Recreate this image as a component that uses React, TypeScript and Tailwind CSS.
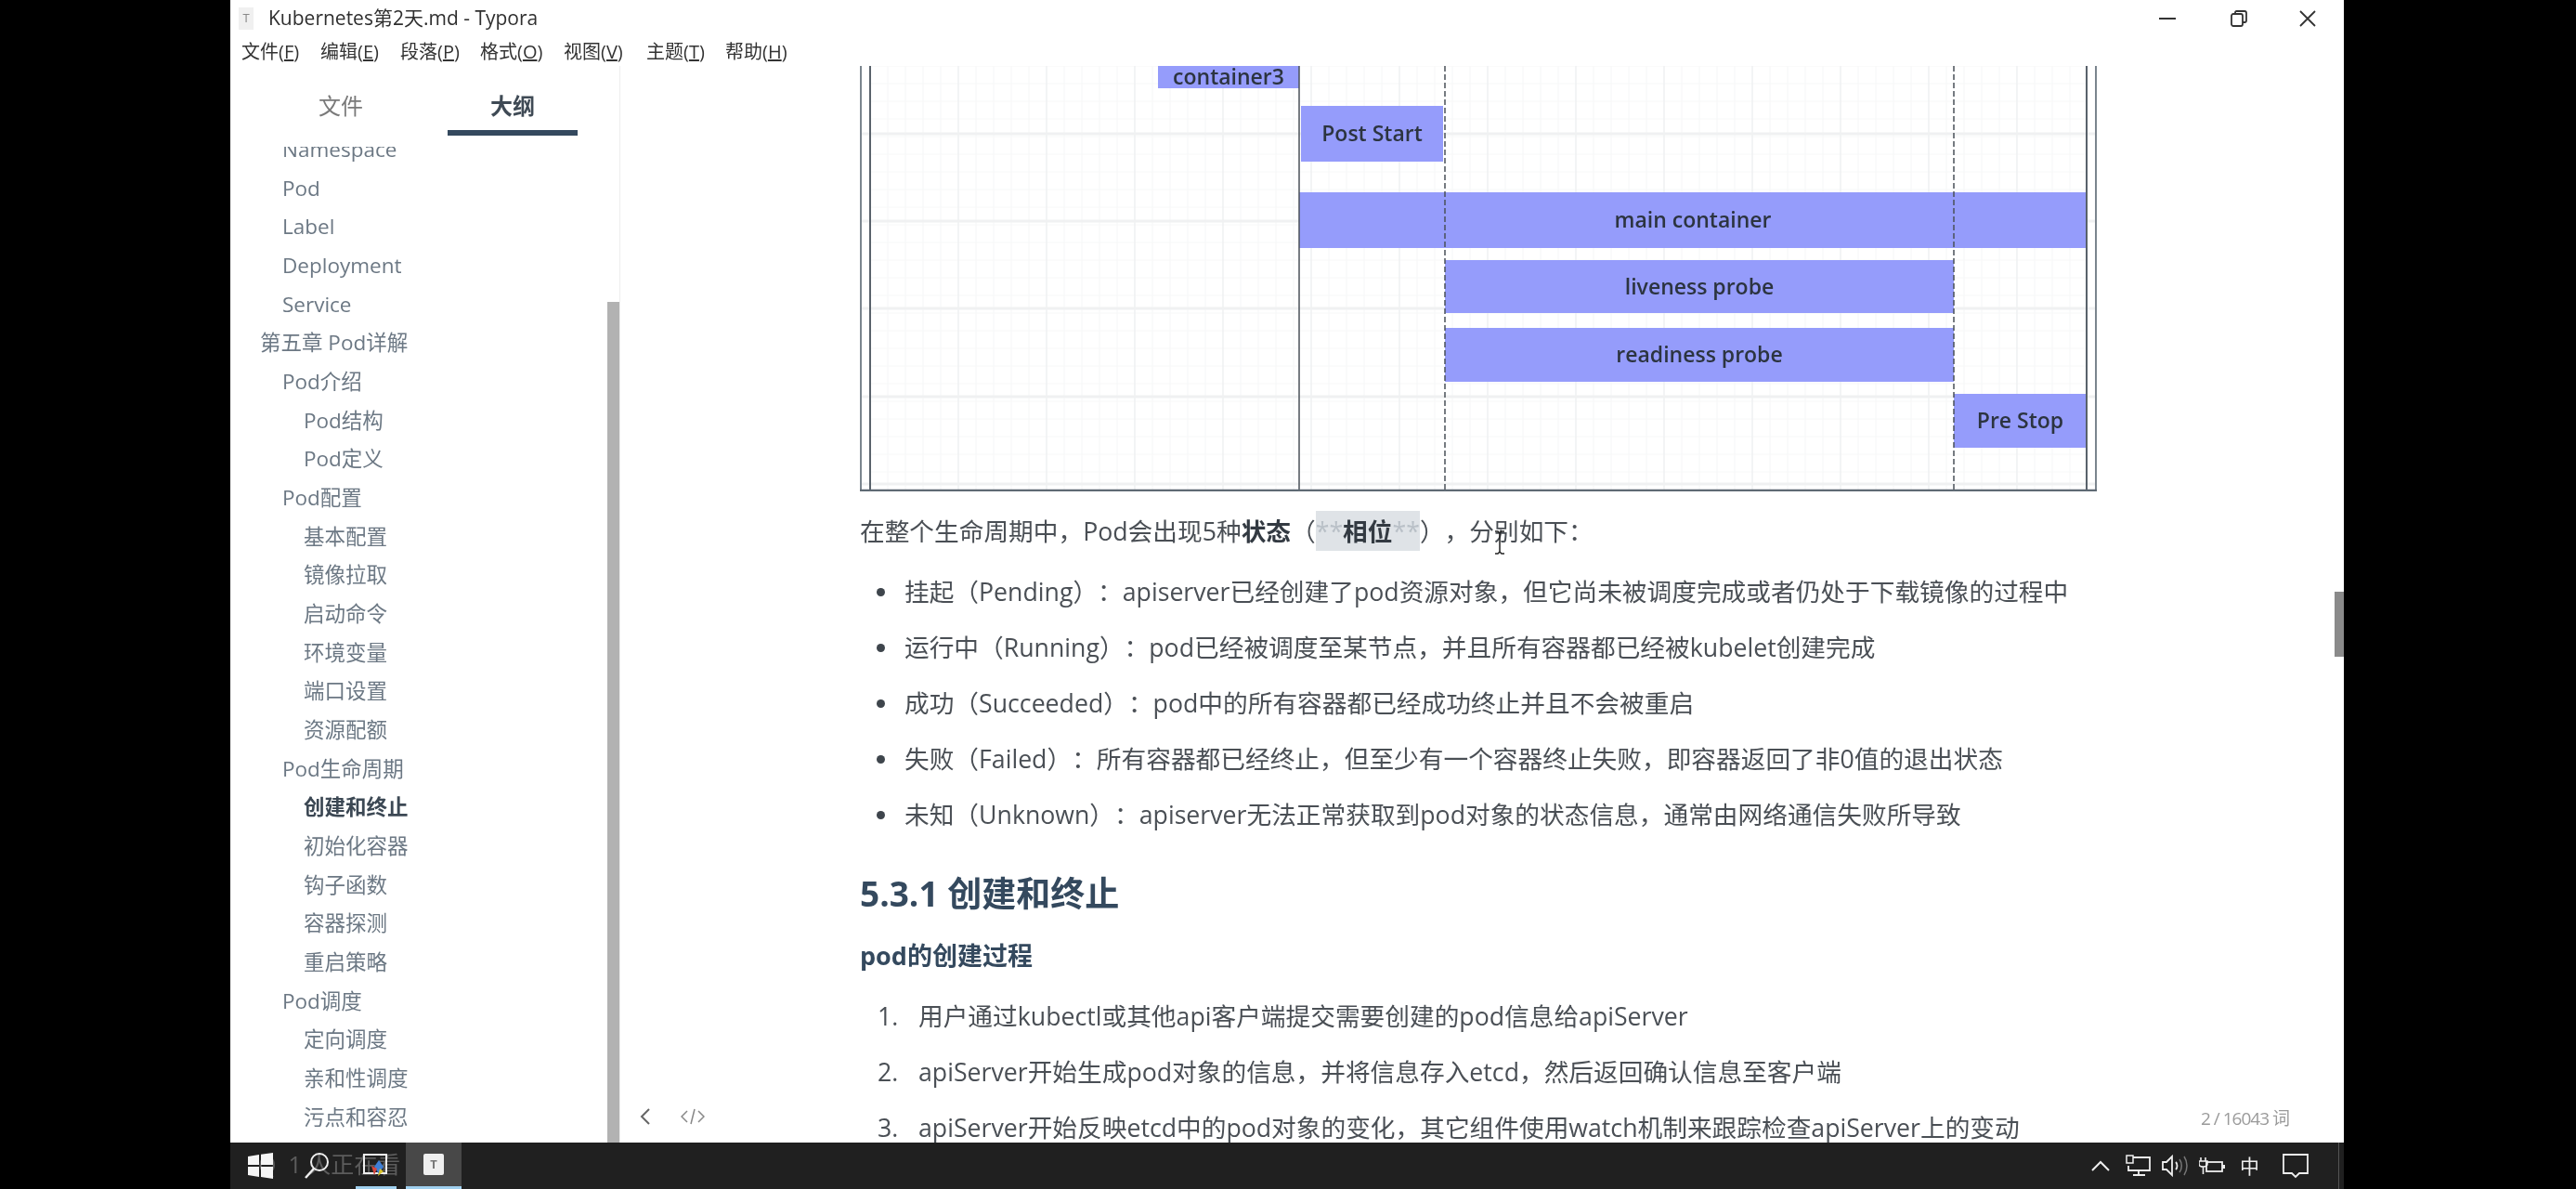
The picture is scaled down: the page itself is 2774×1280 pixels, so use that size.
const FONT = "font-['Open_Sans','Noto_Sans_CJK_SC',sans-serif]";

const MENU = [
  { label: "文件(", key: "F", width: "w-[85px]" },
  { label: "编辑(", key: "E", width: "w-[86px]" },
  { label: "段落(", key: "P", width: "w-[86px]" },
  { label: "格式(", key: "O", width: "w-[90px]" },
  { label: "视图(", key: "V", width: "w-[89px]" },
  { label: "主题(", key: "T", width: "w-[85px]" },
  { label: "帮助(", key: "H", width: "w-[85px]" },
];

// level: 2 = chapter, 3 = section, 4 = sub section
const OUTLINE: { text: string; level: 2 | 3 | 4; active?: boolean }[] = [
  { text: "Namespace", level: 3 },
  { text: "Pod", level: 3 },
  { text: "Label", level: 3 },
  { text: "Deployment", level: 3 },
  { text: "Service", level: 3 },
  { text: "第五章 Pod详解", level: 2 },
  { text: "Pod介绍", level: 3 },
  { text: "Pod结构", level: 4 },
  { text: "Pod定义", level: 4 },
  { text: "Pod配置", level: 3 },
  { text: "基本配置", level: 4 },
  { text: "镜像拉取", level: 4 },
  { text: "启动命令", level: 4 },
  { text: "环境变量", level: 4 },
  { text: "端口设置", level: 4 },
  { text: "资源配额", level: 4 },
  { text: "Pod生命周期", level: 3 },
  { text: "创建和终止", level: 4, active: true },
  { text: "初始化容器", level: 4 },
  { text: "钩子函数", level: 4 },
  { text: "容器探测", level: 4 },
  { text: "重启策略", level: 4 },
  { text: "Pod调度", level: 3 },
  { text: "定向调度", level: 4 },
  { text: "亲和性调度", level: 4 },
  { text: "污点和容忍", level: 4 },
];

const PHASES = [
  "挂起（Pending）：apiserver已经创建了pod资源对象，但它尚未被调度完成或者仍处于下载镜像的过程中",
  "运行中（Running）：pod已经被调度至某节点，并且所有容器都已经被kubelet创建完成",
  "成功（Succeeded）：pod中的所有容器都已经成功终止并且不会被重启",
  "失败（Failed）：所有容器都已经终止，但至少有一个容器终止失败，即容器返回了非0值的退出状态",
  "未知（Unknown）：apiserver无法正常获取到pod对象的状态信息，通常由网络通信失败所导致",
];

const STEPS = [
  "用户通过kubectl或其他api客户端提交需要创建的pod信息给apiServer",
  "apiServer开始生成pod对象的信息，并将信息存入etcd，然后返回确认信息至客户端",
  "apiServer开始反映etcd中的pod对象的变化，其它组件使用watch机制来跟踪检查apiServer上的变动",
];

// chart coordinates are relative to its top left corner
const BARS = [
  { x: 321, y: 0, w: 152, h: 24, label: "container3" },
  { x: 475, y: 43, w: 153, h: 60, label: "Post Start" },
  { x: 473, y: 136, w: 848, h: 60, label: "main container" },
  { x: 630, y: 209, w: 548, h: 57, label: "liveness probe" },
  { x: 630, y: 282, w: 548, h: 58, label: "readiness probe" },
  { x: 1178, y: 353, w: 143, h: 58, label: "Pre Stop" },
];

function LifecycleChart() {
  const minorX = Array.from({ length: 70 }, (_, i) => 11 + i * 19);
  const minorY = Array.from({ length: 24 }, (_, i) => i * 19);
  const majorX = Array.from({ length: 14 }, (_, i) => 11 + i * 95);
  const majorY = [73, 167, 261, 356, 450];

  return (
    <svg width="1332" height="458" className="block shrink-0">
      {minorX.map((x) => (
        <line key={x} x1={x} x2={x} y1="0" y2="456" stroke="#f5f6f7" />
      ))}
      {minorY.map((y) => (
        <line key={y} x1="11" x2="1321" y1={y} y2={y} stroke="#f7f8f8" />
      ))}
      {majorX.map((x) => (
        <line key={x} x1={x} x2={x} y1="0" y2="456" stroke="#ebedef" />
      ))}
      {majorY.map((y) => (
        <line key={y} x1="2" x2="1330" y1={y} y2={y} stroke="#f0f1f2" strokeWidth="3" />
      ))}
      {BARS.map((bar) => (
        <g key={bar.label}>
          <rect x={bar.x} y={bar.y} width={bar.w} height={bar.h} fill="#959cfb" />
          <text
            x={bar.x + bar.w / 2}
            y={bar.y + bar.h / 2 + 8}
            textAnchor="middle"
            fontSize="23"
            fontWeight="600"
            fill="#2c3440"
            fontFamily="'Open Sans', sans-serif"
          >
            {bar.label}
          </text>
        </g>
      ))}
      <line x1="11" x2="11" y1="0" y2="456" stroke="#59626b" strokeWidth="2" />
      <line x1="473" x2="473" y1="0" y2="456" stroke="#4a5058" strokeWidth="1.5" />
      <line x1="630" x2="630" y1="0" y2="456" stroke="#4a5058" strokeWidth="1.5" strokeDasharray="6 3" />
      <line x1="1178" x2="1178" y1="0" y2="456" stroke="#4a5058" strokeWidth="1.5" strokeDasharray="6 3" />
      <line x1="1321" x2="1321" y1="0" y2="456" stroke="#59626b" strokeWidth="2" />
      <line x1="1" x2="1" y1="0" y2="458" stroke="#7b858e" strokeWidth="2" />
      <line x1="1331" x2="1331" y1="0" y2="458" stroke="#7b858e" strokeWidth="2" />
      <line x1="0" x2="1332" y1="457" y2="457" stroke="#5f6a74" strokeWidth="2.5" />
    </svg>
  );
}

function WindowControls() {
  return (
    <div className="flex h-full items-center">
      <svg width="18" height="18" viewBox="0 0 18 18" className="mr-[59px]">
        <line x1="0" x2="18" y1="9" y2="9" stroke="#333" strokeWidth="2" />
      </svg>
      <svg width="18" height="18" viewBox="0 0 18 18" className="mr-[55px]">
        <rect x="1" y="4" width="12" height="13" rx="2" fill="none" stroke="#333" strokeWidth="1.8" />
        <path d="M5 4V2.5C5 1.6 5.6 1 6.5 1H15c1.1 0 2 .9 2 2v8.500c0 .9-.6 1.500-1.500 1.500H13" fill="none" stroke="#333" strokeWidth="1.8" />
      </svg>
      <svg width="20" height="20" viewBox="0 0 20 20" className="mr-[29px]">
        <path d="M2 2l16 16M18 2L2 18" stroke="#333" strokeWidth="1.800" />
      </svg>
    </div>
  );
}

function Sidebar() {
  return (
    <aside className="relative flex h-full w-[420px] shrink-0 flex-col border-r border-[#eeeeee] bg-white">
      <div className="h-[87px] shrink-0 pb-[12px]">
        <div className="flex h-full gap-[45px] pl-[49px] text-[24px]">
          <div className="flex w-[140px] items-center justify-center pt-[11px] text-[#7a7a7a]">文件</div>
          <div className="flex w-[140px] items-center justify-center border-b-[6px] border-[#34495e] pt-[17px] font-bold text-[#3f4a55]">
            大纲
          </div>
        </div>
      </div>
      <div className="min-h-0 flex-1 overflow-hidden">
        <ul className="-mt-[18px]">
          {OUTLINE.map((item) => (
            <li
              key={item.text}
              className={`h-[41.68px] text-[22.5px] leading-[41.68px] ${
                item.level === 2 ? "pl-[32px]" : item.level === 3 ? "pl-[56px]" : "pl-[79px]"
              } ${item.active ? "font-bold text-[#3c4854]" : "text-[#6c7884]"}`}
            >
              {item.text}
            </li>
          ))}
        </ul>
      </div>
      <div className="absolute bottom-0 right-0 top-[254px] w-[13px] bg-[#b2b2b2]" />
    </aside>
  );
}

function Editor() {
  return (
    <main className="relative h-full min-w-0 flex-1 overflow-hidden bg-white">
      <div className="ml-[258px] w-[1332px] text-[26.7px] text-[#4a4f55] [text-spacing-trim:space-all]">
        <LifecycleChart />
        <p className="mt-[25px] h-[36px] leading-[36px]">
          在整个生命周期中，Pod会出现5种<strong className="font-bold text-[#333a42]">状态</strong>（
          <span className="bg-[#dfe3e7] py-[3px] text-[#b9c0c7]">
            **<strong className="font-bold text-[#333a42]">相位</strong>**
          </span>
          ），分别如下：
        </p>
        <ul className="mt-[17px]">
          {PHASES.map((text) => (
            <li key={text} className="flex h-[60px] items-center whitespace-nowrap">
              <span className="ml-[18px] mr-[21px] h-[9px] w-[9px] shrink-0 rounded-full bg-[#3e454c]" />
              {text}
            </li>
          ))}
        </ul>
        <h3 className="mt-[30px] h-[50px] text-[37px] font-bold leading-[50px] text-[#34495e]">5.3.1 创建和终止</h3>
        <h4 className="mt-[22px] h-[40px] text-[27px] font-bold leading-[40px] text-[#34495e]">pod的创建过程</h4>
        <ol className="mt-[15px]">
          {STEPS.map((text, i) => (
            <li key={text} className="flex h-[60px] items-center whitespace-nowrap">
              <span className="w-[63px] shrink-0 pl-[19px]">{i + 1}.</span>
              {text}
            </li>
          ))}
        </ol>
      </div>

      {/* scrollbar and status bar sit over the document */}
      <div className="absolute right-0 top-[566px] h-[70px] w-[10px] bg-[#8a8a8a]" />
      <div className="absolute bottom-[18px] left-[20px] flex items-center gap-[31px] text-[#6d6d6d]">
        <svg width="14" height="20" viewBox="0 0 14 20">
          <path d="M11 2L3 10l8 8" fill="none" stroke="#666" strokeWidth="2" />
        </svg>
        <svg width="26" height="18" viewBox="0 0 26 18">
          <path d="M7 3L1 9l6 6M19 3l6 6-6 6M15 1l-4 16" fill="none" stroke="#888" strokeWidth="1.500" />
        </svg>
      </div>
      <div className="absolute bottom-[12px] left-[1702px] text-[19px] tracking-[-1px] text-[#9a9a9a]">2 / 16043 词</div>

      {/* text cursor */}
      <svg width="14" height="26" viewBox="0 0 14 26" className="absolute left-[940px] top-[500px]">
        <path d="M2 1h3l2 2 2-2h3M7 3v20M2 25h3l2-2 2 2h3" fill="none" stroke="#222" strokeWidth="1.500" />
      </svg>
    </main>
  );
}

function Taskbar() {
  return (
    <footer className="relative flex h-[50px] shrink-0 items-center bg-[#202020] text-white">
      <span className="absolute left-[30px] top-[6px] text-[25px] leading-[34px] text-[#5c5c5c]">Q&nbsp;&nbsp;1 人正在看</span>
      <svg width="27" height="28" viewBox="0 0 27 28" className="relative ml-[19px] shrink-0">
        <path d="M0 4l12-2v11H0zM14 1.700L27 0v13H14zM0 15h12v11L0 24zM14 15h13v13l-13-2z" fill="#f5f5f5" />
      </svg>
      <svg width="28" height="30" viewBox="0 0 28 30" className="relative ml-[33px] shrink-0">
        <circle cx="17" cy="11" r="9" fill="none" stroke="#eee" strokeWidth="2" />
        <path d="M11 18L2 28" stroke="#eee" strokeWidth="2.500" />
      </svg>
      <div className="relative ml-[28px] flex h-full w-[44px] shrink-0 items-center justify-center border-b-[3px] border-[#9fd0ef]">
        <svg width="28" height="28" viewBox="0 0 28 28">
          <rect x="1" y="3" width="24" height="20" fill="none" stroke="#eee" strokeWidth="2" />
          <path d="M17 9l5 7-5 8-5-8z" fill="#3f7fd6" />
          <path d="M9 15l6 3-3 7z" fill="#d6453c" />
          <path d="M18 18l4 3-6 5z" fill="#d9c22e" />
        </svg>
      </div>
      <div className="relative ml-[10px] flex h-full w-[60px] shrink-0 items-center justify-center border-b-[3px] border-[#9fd0ef] bg-[#484848]">
        <div className="flex h-[23px] w-[22px] items-center justify-center rounded-[2px] bg-[#efefef] text-[13px] font-bold leading-none text-[#777]">
          T
        </div>
      </div>

      <div className="ml-auto flex h-full items-center">
        <svg width="20" height="12" viewBox="0 0 20 12" className="shrink-0">
          <path d="M1 11l9-9 9 9" fill="none" stroke="#eee" strokeWidth="2" />
        </svg>
        <svg width="27" height="24" viewBox="0 0 27 24" className="ml-[17px] shrink-0">
          <path d="M8 3h18v14H3v-5M14 17v5M8 22h13" fill="none" stroke="#eee" strokeWidth="1.800" />
          <rect x="1" y="1" width="7" height="8" fill="#202020" stroke="#eee" strokeWidth="1.500" />
        </svg>
        <svg width="28" height="24" viewBox="0 0 28 24" className="ml-[12px] shrink-0">
          <path d="M1 8h4l6-6v20l-6-6H1z" fill="none" stroke="#eee" strokeWidth="1.800" />
          <path d="M15 8c2 2 2 6 0 8" fill="none" stroke="#eee" strokeWidth="1.800" />
          <path d="M19 5c3 4 3 10 0 14M24 2c4 6 4 14 0 20" fill="none" stroke="#777" strokeWidth="1.500" />
        </svg>
        <svg width="28" height="20" viewBox="0 0 28 20" className="ml-[12px] shrink-0">
          <path d="M2 1v4M7 1v4M0 5h9v3c0 2-2 3-4.500 3S0 10 0 8zM4.500 11v8" fill="none" stroke="#eee" strokeWidth="1.600" />
          <rect x="8" y="6" width="17" height="10" fill="none" stroke="#eee" strokeWidth="1.800" />
          <rect x="25" y="9" width="3" height="4" fill="#eee" />
        </svg>
        <span className="ml-[16px] w-[20px] shrink-0 text-[21px] leading-none text-[#eee]">中</span>
        <svg width="28" height="28" viewBox="0 0 28 28" className="ml-[26px] shrink-0">
          <path d="M1 2h26v20H18l-4 4-4-4H1z" fill="none" stroke="#eee" strokeWidth="1.800" />
        </svg>
        <div className="ml-[32px] mr-[5px] h-full w-[1px] bg-[#555]" />
      </div>
    </footer>
  );
}

export default function App() {
  return (
    <div className={`flex h-[1280px] w-[2774px] overflow-hidden bg-black pl-[248px] pr-[250px] blur-[0.7px] ${FONT}`}>
      <div className="relative flex h-full w-full flex-col bg-white">
        <header className="flex h-[40px] shrink-0 items-center justify-between">
          <div className="flex items-center">
            <div className="ml-[9px] flex h-[24px] w-[16px] items-center justify-center bg-[#f0f0f0] text-[13px] text-[#888]">T</div>
            <span className="ml-[16px] text-[21px] text-[#2f2f2f]">Kubernetes第2天.md - Typora</span>
          </div>
          <WindowControls />
        </header>
        <nav className="flex h-[31px] shrink-0 items-center pl-[12px] text-[20px] text-[#333]">
          {MENU.map((item) => (
            <span key={item.key} className={`${item.width} whitespace-nowrap`}>
              {item.label}
              <span className="underline">{item.key}</span>)
            </span>
          ))}
        </nav>
        <div className="flex min-h-0 flex-1">
          <Sidebar />
          <Editor />
        </div>
        <Taskbar />
      </div>
    </div>
  );
}
